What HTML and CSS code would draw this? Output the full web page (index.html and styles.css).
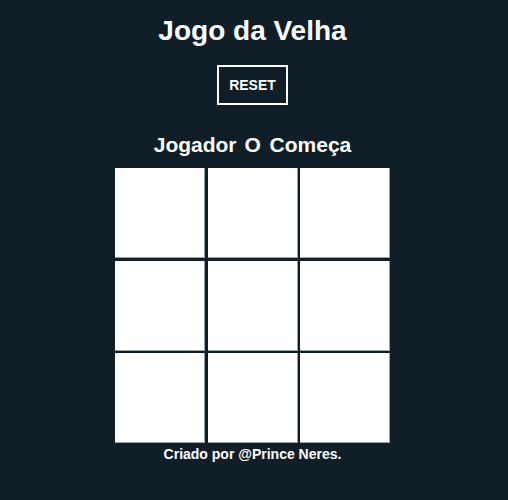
FILE: index.html
```html
<!DOCTYPE html>
<html lang="pt-BR">
<head>
<meta charset="utf-8">
<title>Jogo da Velha</title>
<link rel="stylesheet" href="styles.css">
</head>
<body>
<main class="app">
  <h1 class="title">Jogo da Velha</h1>
  <button class="reset">RESET</button>
  <h2 class="status">Jogador <span class="mark">O</span> Começa</h2>
  <div class="board">
    <div class="cell"></div><div class="cell"></div><div class="cell"></div>
    <div class="cell"></div><div class="cell"></div><div class="cell"></div>
    <div class="cell"></div><div class="cell"></div><div class="cell"></div>
  </div>
  <p class="credit">Criado por @Prince Neres.</p>
</main>
</body>
</html>
```
FILE: styles.css
```css
html, body {
  margin: 0;
  padding: 0;
  background: #0f1e27;
}
body {
  font-family: "Liberation Sans", Arial, sans-serif;
  color: #ffffff;
}
.app {
  display: flex;
  flex-direction: column;
  align-items: center;
  padding: 14px 3px 0 0;
}
.title {
  margin: 0;
  font-size: 28px;
  line-height: 34px;
  font-weight: bold;
}
.reset {
  margin-top: 17px;
  background: transparent;
  color: #ffffff;
  border: 2px solid #ffffff;
  font-family: "Liberation Sans", Arial, sans-serif;
  font-weight: bold;
  font-size: 14px;
  line-height: 17px;
  padding: 10px 10px;
  width: 71px;
  height: 40px;
}
.status {
  margin: 28px 0 0;
  font-size: 21px;
  line-height: 24px;
  font-weight: bold;
}
.mark {
  margin: 0 3px 0 2px;
}
.board {
  margin-top: 11px;
  display: grid;
  grid-template-columns: repeat(3, 90px);
  grid-template-rows: repeat(3, 90px);
  gap: 2.5px;
}
.cell {
  background: #ffffff;
  box-shadow: inset -1px -1px 0 #9aa3a8;
}
.credit {
  margin: 3px 0 0;
  font-size: 14px;
  line-height: 17px;
  font-weight: bold;
}
```
